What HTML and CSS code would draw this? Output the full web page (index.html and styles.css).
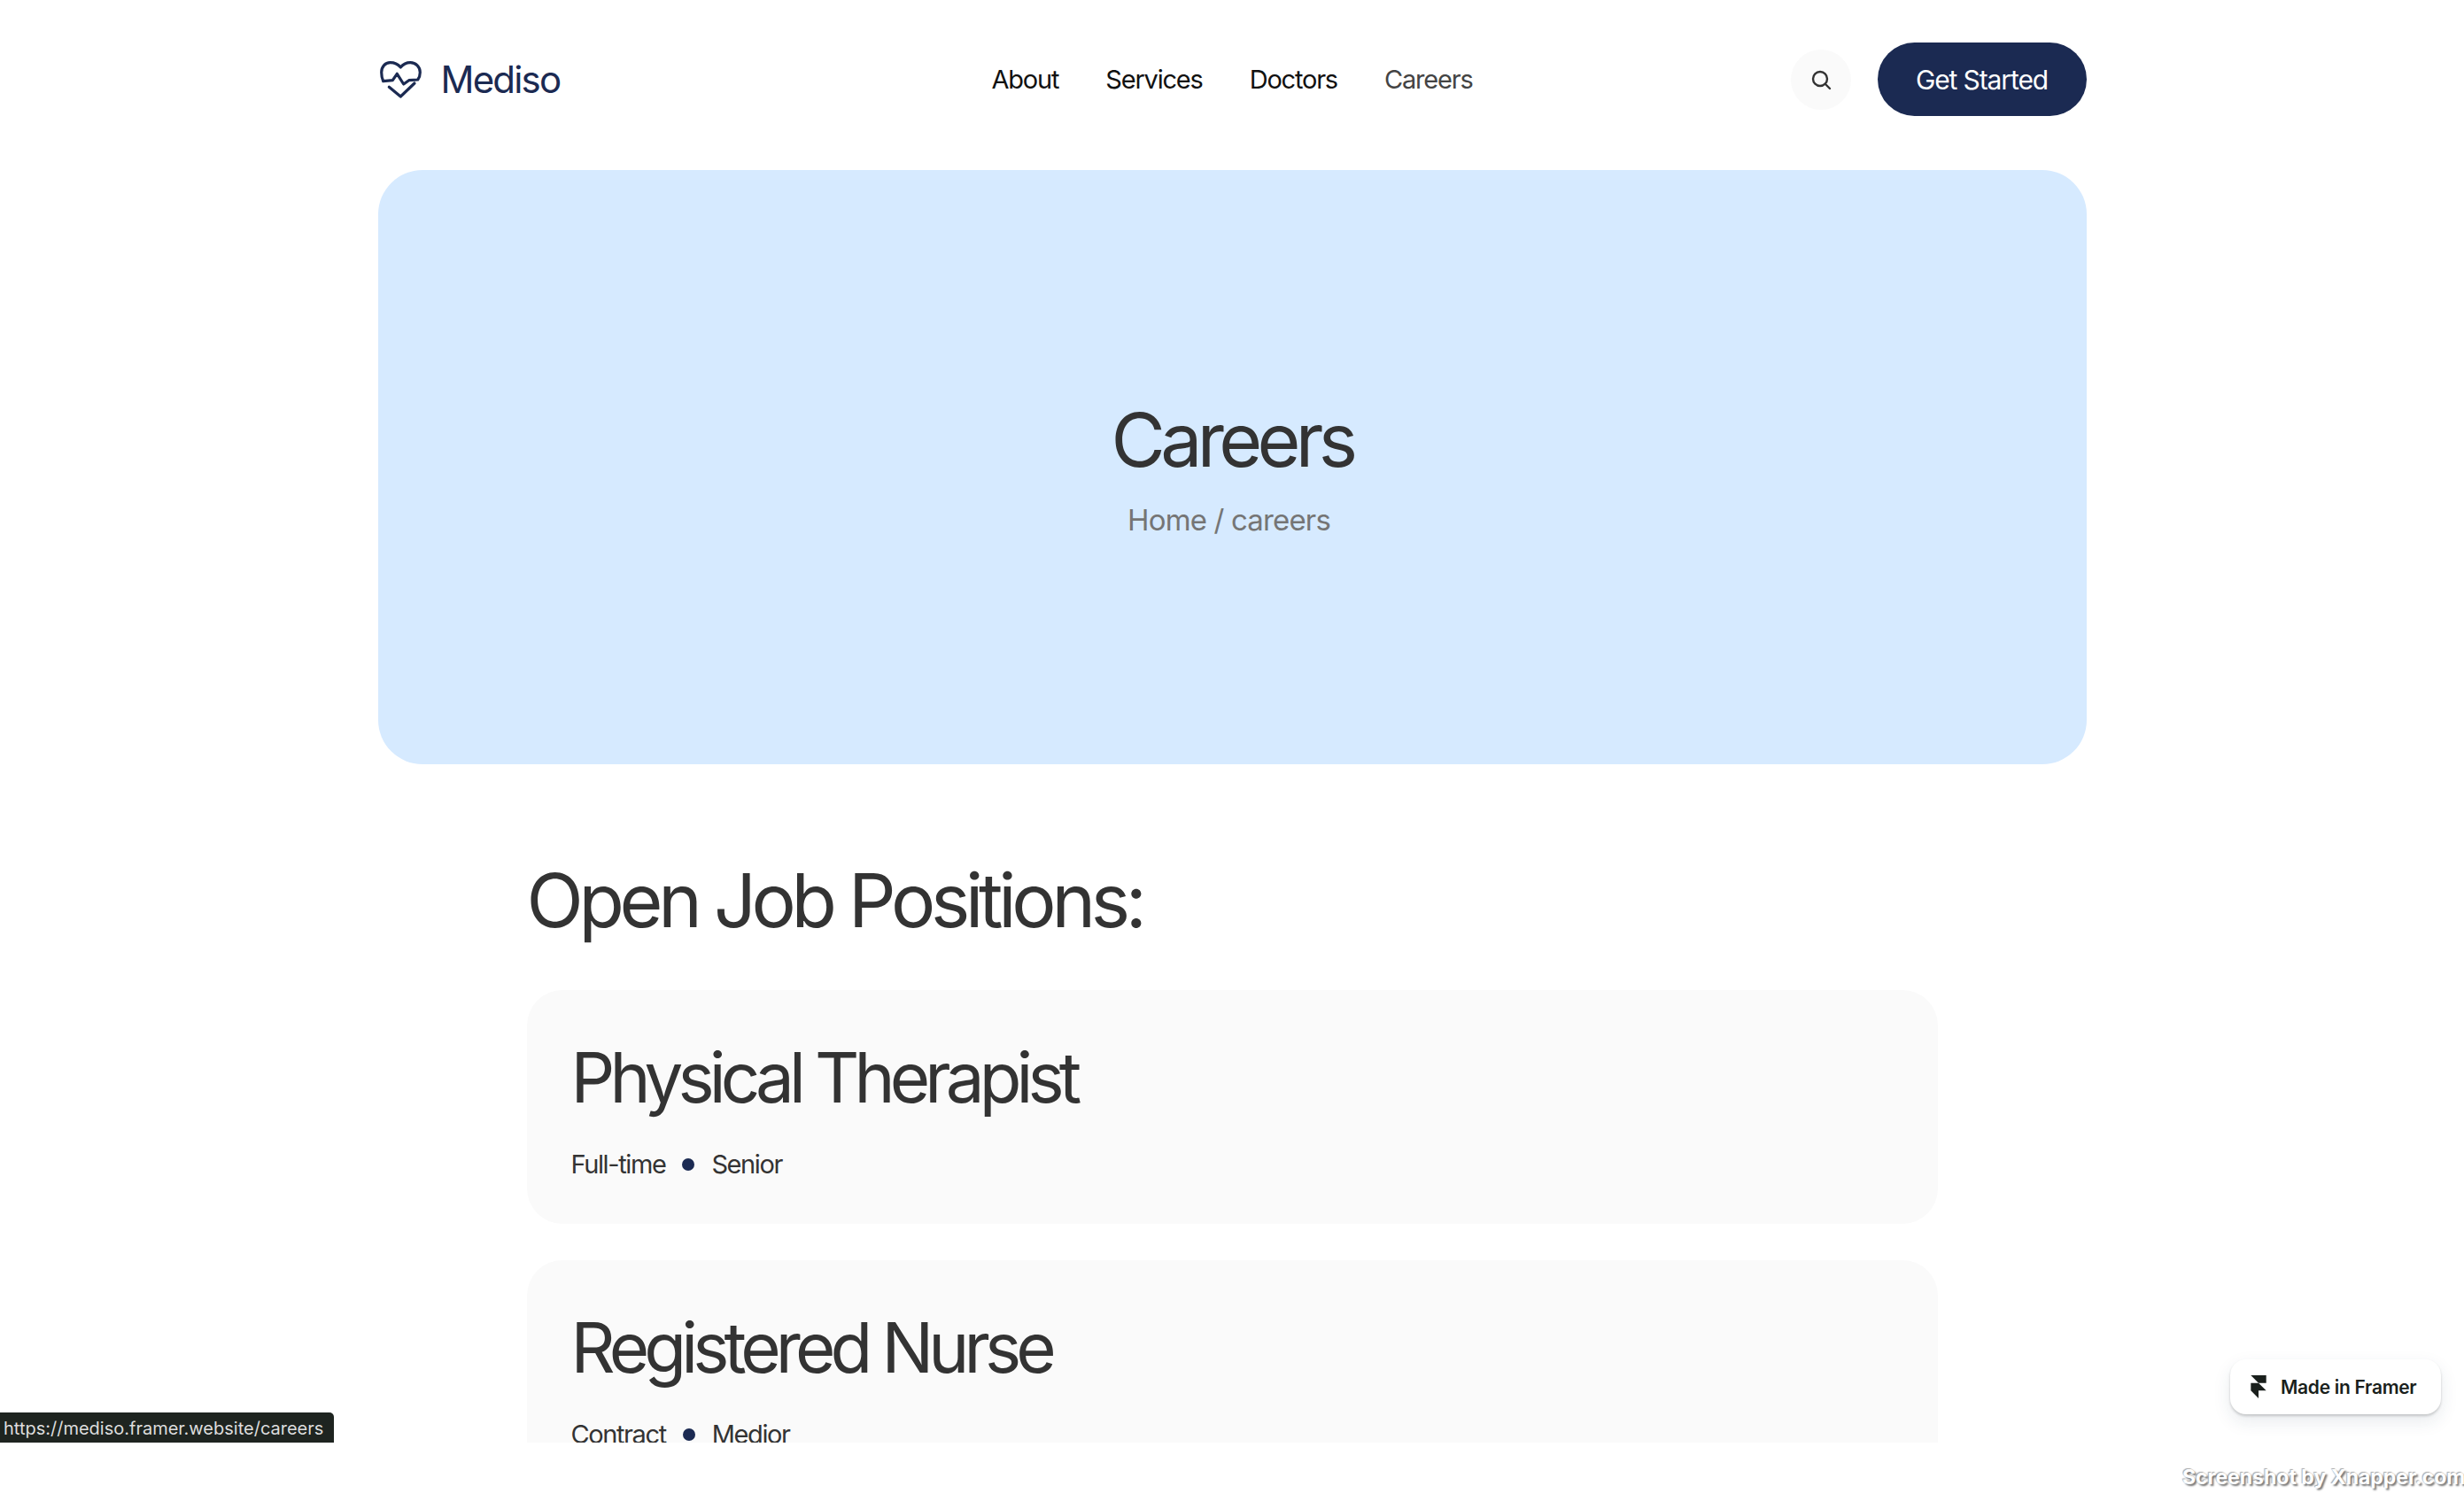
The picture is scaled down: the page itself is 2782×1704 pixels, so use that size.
FILE: index.html
```html
<!DOCTYPE html>
<html>
  <head>
    <title>Mediso - Careers</title>
    <meta name="viewport" content="width=device-width, initial-scale=1.0">
    <link rel="stylesheet" href="styles.css">
  </head>
  <body>
    <div class="viewport">
      <div class="container">
        <div class="navbar">
          <a class="logo" href="#">
            <svg class="logo-icon" viewBox="8 18 49 44" fill="none" stroke="#1b2a52" stroke-width="3.2" stroke-linecap="round" stroke-linejoin="round">
              <path d="M12.7 41.7L23.3 40.7L28.3 33.3L35.7 45L41.7 40.7L51.7 40C53.5 37.5 54.3 35 54.3 31.7C54.3 25.5 49.5 20.7 43.3 20.7C38.8 20.7 35 22.8 32.3 26C29.6 22.8 25.3 20.7 20.5 20.7C14.8 20.7 10.7 25.5 10.7 31.7C10.7 35.5 11.3 38.7 12.7 41.7Z"/>
              <path d="M48 44L32.3 59L19.3 48.3"/>
            </svg>
            <span>Mediso</span>
          </a>
          <div class="nav-links">
            <a href="#">About</a>
            <a href="#">Services</a>
            <a href="#">Doctors</a>
            <a class="active" href="#">Careers</a>
          </div>
          <div class="nav-actions">
            <button class="search-btn">
              <svg viewBox="0 0 24 24" width="24" height="24" fill="none" stroke="#333" stroke-width="2.4" stroke-linecap="round">
                <circle cx="11" cy="11" r="8"/>
                <path d="M17 17l5 5"/>
              </svg>
            </button>
            <a class="cta" href="#">Get Started</a>
          </div>
        </div>

        <div class="hero">
          <h1>Careers</h1>
          <p>Home / careers</p>
        </div>

        <div class="jobs">
          <h2>Open Job Positions:</h2>
          <div class="job-card">
            <h3>Physical Therapist</h3>
            <div class="job-meta">
              <span>Full-time</span>
              <i class="dot"></i>
              <span>Senior</span>
            </div>
          </div>
          <div class="job-card">
            <h3>Registered Nurse</h3>
            <div class="job-meta">
              <span>Contract</span>
              <i class="dot"></i>
              <span>Medior</span>
            </div>
          </div>
        </div>
      </div>

      <div class="status-bubble">https://mediso.framer.website/careers</div>
      <a class="framer-badge" href="#">
        <svg viewBox="0 0 14 21" width="18" height="26" fill="#1a1f1c">
          <path d="M0 0h14v7H7z"/>
          <path d="M0 7h7l7 7H7v7l-7-7z"/>
        </svg>
        <span>Made in Framer</span>
      </a>
    </div>
    <div class="watermark">Screenshot by Xnapper.com</div>
  </body>
</html>
```

FILE: styles.css
```css
body {
  margin: 0;
  padding: 0;
  background-color: white;
  color: #333;
  font-family: 'Inter', sans-serif;
  overflow: hidden;
}
a {
  color: inherit;
  text-decoration: none;
}
.viewport {
  position: relative;
  height: 1629px;
  overflow: hidden;
}
.container {
  width: 1929px;
  margin: 0 auto;
}
.navbar {
  display: grid;
  grid-template-columns: 1fr auto 1fr;
  align-items: center;
  height: 192px;
  padding-bottom: 13px;
  box-sizing: border-box;
}
.logo {
  display: flex;
  align-items: center;
  gap: 21px;
  padding-left: 1px;
  color: #1b2a52;
  font-size: 42px;
  letter-spacing: -1.8px;
}
.logo-icon {
  width: 49px;
  height: 44px;
}
.nav-links {
  display: flex;
  gap: 53px;
  font-size: 29px;
  letter-spacing: -1.2px;
  color: #111;
}
.nav-links a.active {
  color: #444;
}
.nav-actions {
  display: flex;
  justify-content: flex-end;
  align-items: center;
  gap: 30px;
}
.search-btn {
  display: flex;
  align-items: center;
  justify-content: center;
  width: 68px;
  height: 68px;
  padding: 0;
  border: none;
  border-radius: 50%;
  background-color: #fafafa;
}
.cta {
  display: flex;
  align-items: center;
  justify-content: center;
  width: 236px;
  height: 83px;
  border-radius: 42px;
  background-color: #1b2a52;
  color: white;
  font-size: 30px;
  letter-spacing: -1.1px;
}
.hero {
  display: flex;
  flex-direction: column;
  align-items: center;
  height: 671px;
  padding-top: 255px;
  box-sizing: border-box;
  border-radius: 50px;
  background-color: #d6eaff;
}
.hero h1 {
  margin: 0;
  font-size: 84px;
  font-weight: 400;
  line-height: 100px;
  letter-spacing: -5.7px;
  color: #333;
}
.hero p {
  margin: 18px 7px 0 0;
  font-size: 33px;
  line-height: 44px;
  color: #757575;
  letter-spacing: -0.85px;
}
.jobs {
  width: 1593px;
  margin: 0 auto;
}
.jobs h2 {
  margin: 0;
  padding-top: 104px;
  font-size: 84px;
  font-weight: 400;
  line-height: 100px;
  letter-spacing: -5.3px;
  color: #333;
  height: 151px;
}
.job-card {
  height: 264px;
  margin-bottom: 41px;
  padding: 52px 50px 0;
  box-sizing: border-box;
  border-radius: 40px;
  background-color: #fafafa;
}
.job-card h3 {
  margin: 0;
  font-size: 78px;
  font-weight: 400;
  line-height: 94px;
  letter-spacing: -5.9px;
  color: #333;
}
.job-meta {
  display: flex;
  align-items: center;
  gap: 19px;
  margin-top: 31px;
  font-size: 29px;
  line-height: 40px;
  letter-spacing: -1.4px;
  color: #333;
}
.dot {
  width: 14px;
  height: 14px;
  border-radius: 50%;
  background-color: #1b2a52;
}
.status-bubble {
  position: absolute;
  left: 0;
  bottom: 0;
  width: 377px;
  height: 34px;
  padding-left: 4px;
  box-sizing: border-box;
  border-top-right-radius: 5px;
  background-color: #1e2420;
  color: #ddd;
  font-size: 20px;
  line-height: 36px;
  white-space: nowrap;
}
.framer-badge {
  position: absolute;
  right: 26px;
  top: 1535px;
  display: flex;
  align-items: center;
  gap: 16px;
  width: 238px;
  height: 62px;
  padding-left: 23px;
  box-sizing: border-box;
  border-radius: 18px;
  background-color: white;
  box-shadow: 0 2px 3px rgba(0, 0, 0, 0.18), 0 8px 20px rgba(30, 60, 90, 0.1);
  color: #1a1f1c;
  font-size: 21px;
  font-weight: 600;
  letter-spacing: -0.3px;
  white-space: nowrap;
}
.watermark {
  position: absolute;
  left: 2464px;
  top: 1654px;
  color: white;
  font-size: 23px;
  font-weight: 700;
  white-space: nowrap;
  text-shadow: 2px 2px 2px #777, -1px -1px 1px #aaa;
}
```
